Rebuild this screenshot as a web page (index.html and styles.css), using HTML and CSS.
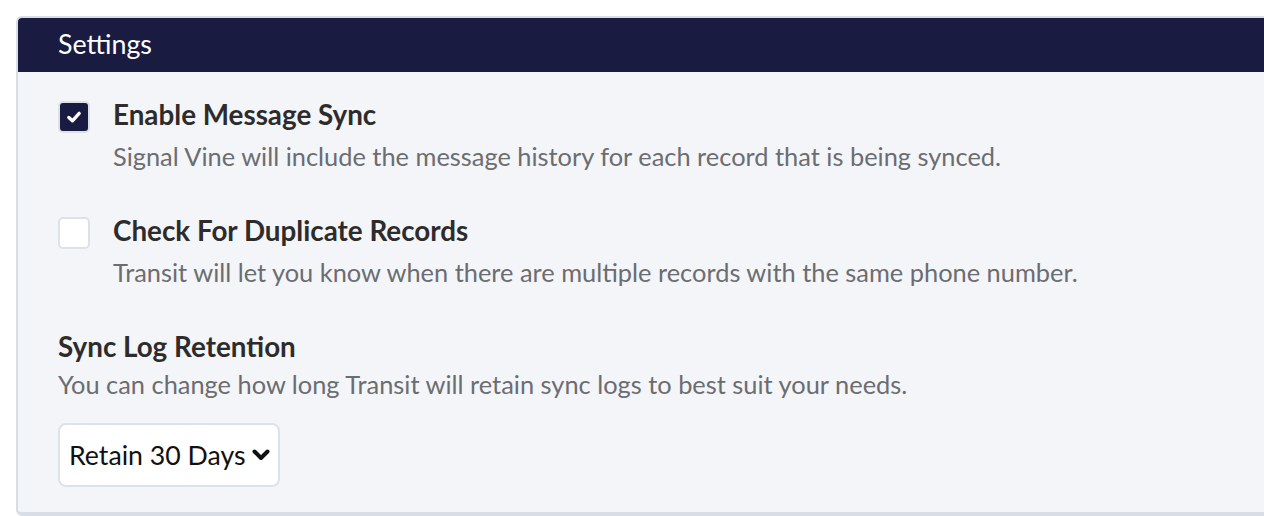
FILE: index.html
```html
<!DOCTYPE html>
<html lang="en">
<head>
<meta charset="utf-8">
<title>Settings</title>
<link rel="stylesheet" href="styles.css">
</head>
<body>
<section class="card">
  <header class="card-header">Settings</header>
  <div class="card-body">
    <div class="option">
      <span class="checkbox checked">
        <svg viewBox="0 0 16 16" width="18" height="18"><path d="M3.4 8.4 L6.6 11.4 L12.6 4.8" fill="none" stroke="#fff" stroke-width="3" stroke-linecap="round" stroke-linejoin="round"/></svg>
      </span>
      <div class="option-text">
        <div class="option-title">Enable Message Sync</div>
        <div class="option-desc">Signal Vine will include the message history for each record that is being synced.</div>
      </div>
    </div>
    <div class="option">
      <span class="checkbox"></span>
      <div class="option-text">
        <div class="option-title">Check For Duplicate Records</div>
        <div class="option-desc">Transit will let you know when there are multiple records with the same phone number.</div>
      </div>
    </div>
    <div class="field">
      <div class="option-title">Sync Log Retention</div>
      <div class="option-desc">You can change how long Transit will retain sync logs to best suit your needs.</div>
      <div class="select">
        <span>Retain 30 Days</span>
        <svg viewBox="0 0 16 16" width="20" height="20"><path d="M2.8 5.2 L8 10.4 L13.2 5.2" fill="none" stroke="#111" stroke-width="3.2" stroke-linecap="round" stroke-linejoin="round"/></svg>
      </div>
    </div>
  </div>
</section>
</body>
</html>
```
FILE: styles.css
```css
html, body {
  margin: 0;
  padding: 0;
  background: #ffffff;
  overflow: hidden;
}
body {
  padding: 16px 0 0 16px;
  font-family: Lato, "Open Sans", sans-serif;
  color: #2b2826;
}
.card {
  width: 1300px;
  height: 500px;
  border: 2px solid #d8dde6;
  border-bottom-width: 4px;
  border-radius: 6px;
  background: #f4f5f9;
  overflow: hidden;
  box-sizing: border-box;
}
.card-header {
  height: 54px;
  background: #1a1b41;
  color: #ffffff;
  font-size: 26.8px;
  line-height: 52px;
  display: flex;
  align-items: flex-start;
  padding-left: 40px;
}
.card-body {
  padding: 26px 40px 0 40px;
  display: flex;
  flex-direction: column;
}
.option {
  display: flex;
  align-items: flex-start;
  gap: 23px;
  height: 116px;
}
.checkbox {
  width: 32px;
  height: 32px;
  box-sizing: border-box;
  border: 2px solid #dde1e8;
  border-radius: 5px;
  background: #ffffff;
  display: flex;
  align-items: center;
  justify-content: center;
  margin-top: 3px;
  flex: none;
}
.checkbox.checked {
  background: #1a1b41;
}
.option-title {
  font-size: 27.8px;
  font-weight: 700;
  line-height: 32px;
  padding-top: 1px;
  color: #2e2c2b;
}
.option-desc {
  font-size: 25.4px;
  line-height: 42px;
  color: #6b6d70;
  margin-top: 4px;
}
.field .option-desc {
  margin-top: 0;
}
.select {
  margin-top: 18px;
  width: 222px;
  height: 64px;
  box-sizing: border-box;
  border: 2px solid #dde1e8;
  border-radius: 8px;
  background: #ffffff;
  display: flex;
  align-items: center;
  gap: 5px;
  padding-left: 9px;
  font-size: 26.7px;
  color: #111111;
}
```
